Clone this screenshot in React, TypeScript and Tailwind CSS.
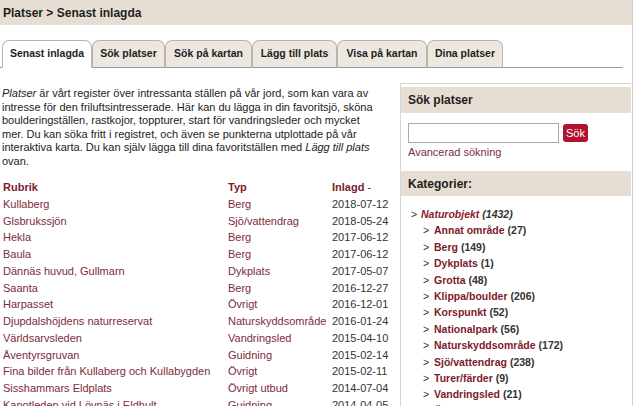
const TABS = [
  { label: 'Senast inlagda', w: 'w-[90px]', active: true },
  { label: 'Sök platser', w: 'w-[73px]' },
  { label: 'Sök på kartan', w: 'w-[87px]' },
  { label: 'Lägg till plats', w: 'w-[85px]' },
  { label: 'Visa på kartan', w: 'w-[90px]' },
  { label: 'Dina platser', w: 'w-[76px]' },
]

const ROWS = [
  ['Kullaberg', 'Berg', '2018-07-12'],
  ['Glsbrukssjön', 'Sjö/vattendrag', '2018-05-24'],
  ['Hekla', 'Berg', '2017-06-12'],
  ['Baula', 'Berg', '2017-06-12'],
  ['Dännäs huvud, Gullmarn', 'Dykplats', '2017-05-07'],
  ['Saanta', 'Berg', '2016-12-27'],
  ['Harpasset', 'Övrigt', '2016-12-01'],
  ['Djupdalshöjdens naturreservat', 'Naturskyddsområde', '2016-01-24'],
  ['Världsarvsleden', 'Vandringsled', '2015-04-10'],
  ['Äventyrsgruvan', 'Guidning', '2015-02-14'],
  ['Fina bilder från Kullaberg och Kullabygden', 'Övrigt', '2015-02-11'],
  ['Sisshammars Eldplats', 'Övrigt utbud', '2014-07-04'],
  ['Kanotleden vid Lövnäs i Eldhult', 'Guidning', '2014-04-05'],
]

const CATEGORIES = [
  ['Annat område', 27],
  ['Berg', 149],
  ['Dykplats', 1],
  ['Grotta', 48],
  ['Klippa/boulder', 206],
  ['Korspunkt', 52],
  ['Nationalpark', 56],
  ['Naturskyddsområde', 172],
  ['Sjö/vattendrag', 238],
  ['Turer/färder', 9],
  ['Vandringsled', 21],
  ['Övrigt', 453],
]

export default function App() {
  return (
    <div className="w-[633px] h-[406px] overflow-hidden border-r border-[#cfcfcf] bg-white font-['Liberation_Sans',Arial,sans-serif] text-[#222]">
      {/* Breadcrumb */}
      <div className="h-[25px] bg-[#e6ded2] px-[3px] flex items-center text-[12px] font-bold text-[#1e1e1e]">
        Platser &gt; Senast inlagda
      </div>

      {/* Tabs */}
      <div className="mt-[15px] mr-[9px] pl-[2px] h-[28px] flex items-end border-b border-[#9a9a9a]">
        {TABS.map((t) => (
          <div
            key={t.label}
            className={`${t.w} h-[28px] -mb-px flex items-center justify-center rounded-t-[7px] border border-[#b9b4ab] text-[10.5px] font-bold text-[#1e1e1e] ${
              t.active ? 'bg-white border-b-white' : 'bg-[#ece8e0] border-b-[#9a9a9a]'
            }`}
          >
            {t.label}
          </div>
        ))}
      </div>

      <div className="flex">
        {/* Main column */}
        <div className="w-[400px] pl-[2px]">
          <p className="mt-[19px] text-[11px] leading-[13.5px] text-[#222] whitespace-nowrap">
            <i>Platser</i> är vårt register över intressanta ställen på vår jord, som kan vara av
            <br />
            intresse för den friluftsintresserade. Här kan du lägga in din favoritsjö, sköna
            <br />
            boulderingställen, rastkojor, toppturer, start för vandringsleder och mycket
            <br />
            mer. Du kan söka fritt i registret, och även se punkterna utplottade på vår
            <br />
            interaktiva karta. Du kan själv lägga till dina favoritställen med <i>Lägg till plats</i>
            <br />
            ovan.
          </p>

          <div className="mt-[11px] grid grid-cols-[225px_104px_60px] text-[11px] leading-[16.75px] pl-px">
            <span className="font-bold text-[#7a1c2c]">Rubrik</span>
            <span className="font-bold text-[#7a1c2c]">Typ</span>
            <span className="font-bold text-[#7a1c2c]">
              Inlagd <span className="font-normal">-</span>
            </span>
            {ROWS.map(([name, type, date]) => (
              <div key={name} className="contents">
                <span className="text-[#7d2b3b] whitespace-nowrap">{name}</span>
                <span className="text-[#7d2b3b] whitespace-nowrap">{type}</span>
                <span className="text-[#333]">{date}</span>
              </div>
            ))}
          </div>
        </div>

        {/* Sidebar */}
        <div className="w-[231px] mt-[15px] border-l border-t border-[#d6d6d6] pt-[3px]">
          <div className="h-[26px] bg-[#e6ded2] pl-[7px] flex items-center text-[12px] font-bold text-[#1e1e1e]">
            Sök platser
          </div>
          <div className="pl-[7px] pt-[10px] pb-[12px]">
            <div className="flex items-center gap-[4px]">
              <input className="w-[151px] h-[20px] border border-[#a9a9a9] bg-white outline-none" />
              <button className="w-[25px] h-[18px] rounded-[3px] bg-[#b3122c] text-white text-[11px] leading-[18px] text-center">
                Sök
              </button>
            </div>
            <div className="mt-[2px] text-[11px] leading-[14px] text-[#7b2f40]">Avancerad sökning</div>
          </div>

          <div className="h-[25px] bg-[#e6ded2] pl-[7px] flex items-center text-[12px] font-bold text-[#1e1e1e]">
            Kategorier:
          </div>
          <div className="pt-[10px] pl-[10px] text-[10.5px] leading-[16.4px] font-bold">
            <div className="flex items-center">
              <span className="w-[10px] font-normal text-[#333]">&gt;</span>
              <span className="italic text-[#8a1a2c]">Naturobjekt</span>
              <span className="italic text-[#333] ml-[3px]">(1432)</span>
            </div>
            {CATEGORIES.map(([name, count]) => (
              <div key={name} className="flex items-center pl-[12px]">
                <span className="w-[11px] font-normal text-[#333]">&gt;</span>
                <span className="text-[#7d1a2c]">{name}</span>
                <span className="text-[#333] ml-[3px]">({count})</span>
              </div>
            ))}
          </div>
        </div>
      </div>
    </div>
  )
}
